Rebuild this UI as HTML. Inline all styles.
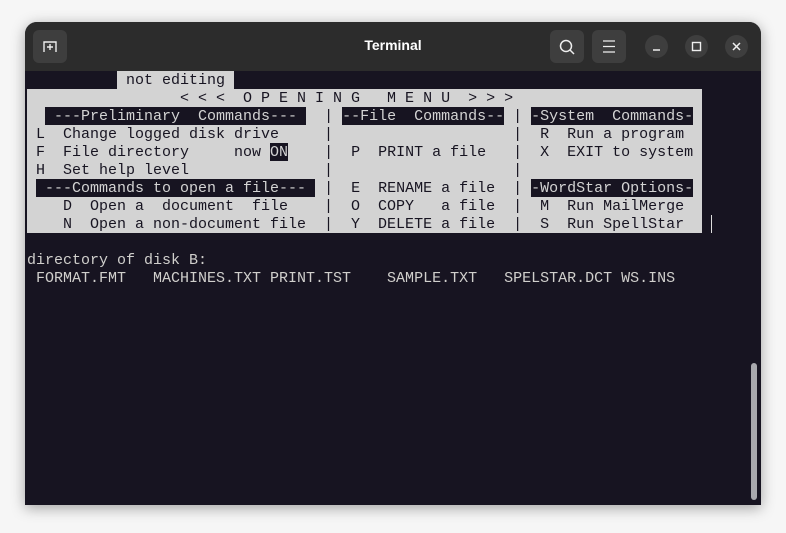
<!DOCTYPE html>
<html><head><meta charset="utf-8"><style>
html,body{margin:0;padding:0;width:786px;height:533px;background:#f6f6f6;overflow:hidden}
.win{position:absolute;left:25px;top:22px;width:736px;height:483px;background:#171421;border-radius:12px 12px 0 0;box-shadow:0 3px 14px rgba(0,0,0,.35);overflow:hidden}
.tb{position:absolute;left:0;top:0;width:736px;height:49px;background:#2c2c2c}
.title{position:absolute;left:0;width:736px;top:15px;text-align:center;color:#fff;font:bold 14px "Liberation Sans",sans-serif}
.btn{position:absolute;top:8px;width:34px;height:33px;background:#3e3e3e;border-radius:6px}
.circ{position:absolute;top:13px;width:23px;height:23px;border-radius:50%;background:#3e3e3e}
.term{position:absolute;left:2px;top:49px;font:15px/18px "Liberation Mono",monospace;color:#d0cfcc;white-space:pre}
.term div{height:18px;padding-top:1px;box-sizing:border-box}
.g{background:#d3d3d3;color:#171421;display:inline-block;height:18px;vertical-align:top;margin-top:-1px;padding-top:1px;box-sizing:border-box}
.i{background:#171421;color:#d3d3d3;display:inline-block;height:18px;vertical-align:top;margin-top:-1px;padding-top:1px;box-sizing:border-box}
.sb{position:absolute;left:726px;top:341px;width:6px;height:137px;border-radius:3px;background:#a8a8ad}
.cur{position:absolute;left:686px;top:193px;width:1px;height:18px;background:#ddd}
</style></head><body>
<div class="win">
<div class="tb">
<div class="btn" style="left:8px"><svg width="34" height="33"><path d="M11 22V12h12v10M17 14v6M14 17h6" stroke="#eee" stroke-width="1.4" fill="none"/></svg></div>
<div class="title">Terminal</div>
<div class="btn" style="left:525px"><svg width="34" height="33"><circle cx="16" cy="16" r="5.5" stroke="#eee" stroke-width="1.5" fill="none"/><path d="M20 20l4 4" stroke="#eee" stroke-width="1.5"/></svg></div>
<div class="btn" style="left:567px"><svg width="34" height="33"><path d="M11 11h12M11 16.5h12M11 22h12" stroke="#eee" stroke-width="1.3"/></svg></div>
<div class="circ" style="left:620px"><svg width="23" height="23"><path d="M8 15h7" stroke="#eee" stroke-width="1.4"/></svg></div>
<div class="circ" style="left:660px"><svg width="23" height="23"><rect x="7.5" y="7.5" width="8" height="8" stroke="#eee" stroke-width="1.4" fill="none"/></svg></div>
<div class="circ" style="left:700px"><svg width="23" height="23"><path d="M8 8l7 7M15 8l-7 7" stroke="#eee" stroke-width="1.5"/></svg></div>
</div>
<div class="term"><div>          <span class="g"> not editing </span></div><div><span class="g">                 &lt; &lt; &lt;  O P E N I N G   M E N U  &gt; &gt; &gt;                     </span></div><div><span class="g">  <span class="i"> ---Preliminary  Commands--- </span>  | <span class="i">--File  Commands--</span> | <span class="i">-System  Commands-</span> </span></div><div><span class="g"> L  Change logged disk drive     |                    |  R  Run a program  </span></div><div><span class="g"> F  File directory     now <span class="i">ON</span>    |  P  PRINT a file   |  X  EXIT to system </span></div><div><span class="g"> H  Set help level               |                    |                    </span></div><div><span class="g"> <span class="i"> ---Commands to open a file--- </span> |  E  RENAME a file  | <span class="i">-WordStar Options-</span> </span></div><div><span class="g">    D  Open a  document  file    |  O  COPY   a file  |  M  Run MailMerge  </span></div><div><span class="g">    N  Open a non-document file  |  Y  DELETE a file  |  S  Run SpellStar  </span></div><div> </div><div>directory of disk B:</div><div> FORMAT.FMT   MACHINES.TXT PRINT.TST    SAMPLE.TXT   SPELSTAR.DCT WS.INS</div></div>
<div class="cur"></div>
<div class="sb"></div>
</div>
</body></html>
